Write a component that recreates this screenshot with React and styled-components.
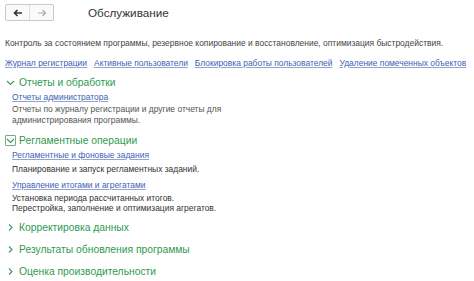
import React from "react";
import styled, { createGlobalStyle } from "styled-components";

const Global = createGlobalStyle`
  html, body { margin: 0; padding: 0; background: #fff; }
  body { font-family: "Liberation Sans", Arial, sans-serif; color: #333; }
`;

const Page = styled.div`
  width: 474px;
  height: 281px;
  overflow: hidden;
  padding: 4px 0 0 5px;
  box-sizing: border-box;
  display: flex;
  flex-direction: column;
`;

const Header = styled.div`
  display: flex;
  align-items: center;
  height: 17px;
`;

const NavGroup = styled.div`
  display: flex;
  border: 1px solid #c9c9c9;
  border-radius: 2px;
  background: #fafafa;
`;

const NavButton = styled.div`
  width: 23px;
  height: 15px;
  display: flex;
  align-items: center;
  justify-content: center;
  & + & { border-left: 1px solid #dcdcdc; }
`;

const Title = styled.div`
  margin-left: 34px;
  font-size: 11.7px;
  color: #333;
  line-height: 17px;
`;

const Description = styled.div`
  margin-top: 17px;
  font-size: 8.45px;
  color: #444;
  line-height: 11px;
`;

const LinkRow = styled.div`
  display: flex;
  gap: 7px;
  margin-top: 9px;
`;

const Link = styled.a`
  font-size: 8.45px;
  line-height: 11px;
  color: #3f62b3;
  text-decoration: underline;
  text-decoration-color: #8fa3d4;
  white-space: nowrap;
  cursor: pointer;
`;

const Group = styled.div`
  display: flex;
  flex-direction: column;
  margin-top: ${p => p.$mt}px;
`;

const GroupHeader = styled.div`
  display: flex;
  align-items: center;
  height: 14px;
  gap: 3px;
  font-size: 10.3px;
  color: #2f9a52;
`;

const Chevron = styled.div`
  width: 11px;
  height: 11px;
  display: flex;
  align-items: center;
  justify-content: center;
  box-sizing: border-box;
  border: 1px solid ${p => (p.$boxed ? "#7aa88a" : "transparent")};
  border-radius: 1px;
`;

const Items = styled.div`
  display: flex;
  flex-direction: column;
  padding-left: 7px;
`;

const ItemLink = styled(Link)`
  margin-top: ${p => p.$mt}px;
  align-self: flex-start;
`;

const ItemText = styled.div`
  font-size: 8.45px;
  line-height: 10.5px;
  color: ${p => p.$tone || "#4a4a4a"};
  margin-top: ${p => p.$mt ?? 1}px;
`;

function Arrow({ dir, color }) {
  return (
    <svg width="10" height="8" viewBox="0 0 10 8">
      {dir === "left" ? (
        <path d="M9 4H2M4.5 1L1.5 4l3 3" stroke={color} strokeWidth="1.6" fill="none" />
      ) : (
        <path d="M1 4h7M5.5 1l3 3-3 3" stroke={color} strokeWidth="1.2" fill="none" />
      )}
    </svg>
  );
}

function ChevronIcon({ open }) {
  return (
    <svg width="9" height="7" viewBox="0 0 9 7">
      {open ? (
        <path d="M1 2l3.5 3.5L8 2" stroke="#3d9a5c" strokeWidth="1.1" fill="none" />
      ) : (
        <path d="M3 0.5l3 3-3 3" stroke="#3d9a5c" strokeWidth="1.1" fill="none" />
      )}
    </svg>
  );
}

function GroupTitle({ open, boxed, children }) {
  return (
    <GroupHeader>
      <Chevron $boxed={boxed}>
        <ChevronIcon open={open} />
      </Chevron>
      <span>{children}</span>
    </GroupHeader>
  );
}

export default function App() {
  return (
    <>
      <Global />
      <Page>
        <Header>
          <NavGroup>
            <NavButton><Arrow dir="left" color="#333" /></NavButton>
            <NavButton><Arrow dir="right" color="#aaa" /></NavButton>
          </NavGroup>
          <Title>Обслуживание</Title>
        </Header>
        <Description>
          Контроль за состоянием программы, резервное копирование и восстановление, оптимизация быстродействия.
        </Description>
        <LinkRow>
          <Link>Журнал регистрации</Link>
          <Link>Активные пользователи</Link>
          <Link>Блокировка работы пользователей</Link>
          <Link>Удаление помеченных объектов</Link>
        </LinkRow>
        <Group $mt={6}>
          <GroupTitle open>Отчеты и обработки</GroupTitle>
          <Items>
            <ItemLink $mt={3}>Отчеты администратора</ItemLink>
            <ItemText $tone="#555">
              Отчеты по журналу регистрации и другие отчеты для
              <br />
              администрирования программы.
            </ItemText>
          </Items>
        </Group>
        <Group $mt={8}>
          <GroupTitle open boxed>Регламентные операции</GroupTitle>
          <Items>
            <ItemLink $mt={3}>Регламентные и фоновые задания</ItemLink>
            <ItemText $tone="#333" $mt={3}>Планирование и запуск регламентных заданий.</ItemText>
            <ItemLink $mt={5}>Управление итогами и агрегатами</ItemLink>
            <ItemText $tone="#333" $mt={2}>
              Установка периода рассчитанных итогов.
              <br />
              Перестройка, заполнение и оптимизация агрегатов.
            </ItemText>
          </Items>
        </Group>
        <Group $mt={7}>
          <GroupTitle>Корректировка данных</GroupTitle>
        </Group>
        <Group $mt={8}>
          <GroupTitle>Результаты обновления программы</GroupTitle>
        </Group>
        <Group $mt={8}>
          <GroupTitle>Оценка производительности</GroupTitle>
        </Group>
      </Page>
    </>
  );
}
